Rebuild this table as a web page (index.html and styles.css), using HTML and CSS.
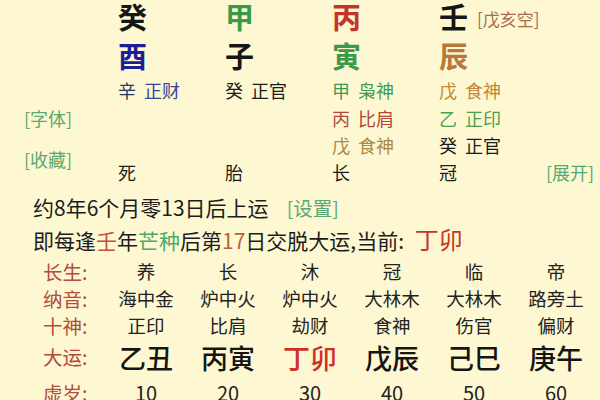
FILE: index.html
```html
<!DOCTYPE html>
<html lang="zh-CN">
<head>
<meta charset="utf-8">
<title>八字排盘</title>
<link rel="stylesheet" href="styles.css">
</head>
<body>
<div class="page">
  <div class="pillars">
    <div></div>
    <div class="gz black">癸</div>
    <div class="gz green">甲</div>
    <div class="gz red">丙</div>
    <div class="gz black">壬<span class="kong">[戊亥空]</span></div>
    <div></div>

    <div></div>
    <div class="gz blue">酉</div>
    <div class="gz black">子</div>
    <div class="gz green">寅</div>
    <div class="gz brown">辰</div>
    <div></div>

    <div></div>
    <div class="hs navy"><span>辛</span><span class="navy2">正财</span></div>
    <div class="hs"><span>癸</span><span>正官</span></div>
    <div class="hs green2"><span>甲</span><span>枭神</span></div>
    <div class="hs orange"><span>戊</span><span>食神</span></div>
    <div></div>

    <div class="side">[字体]</div>
    <div></div>
    <div></div>
    <div class="hs rust"><span>丙</span><span>比肩</span></div>
    <div class="hs green3"><span>乙</span><span>正印</span></div>
    <div></div>

    <div class="side span2">[收藏]</div>
    <div></div>
    <div></div>
    <div class="hs olive"><span>戊</span><span>食神</span></div>
    <div class="hs"><span>癸</span><span>正官</span></div>
    <div></div>

    <div class="hs">死</div>
    <div class="hs">胎</div>
    <div class="hs">长</div>
    <div class="hs">冠</div>
    <div class="side expand">[展开]</div>
  </div>

  <div class="lines">
    <p class="line">约8年6个月零13日后上运<span class="link">[设置]</span></p>
    <p class="line">即每逢<span class="t-red">壬</span>年<span class="t-green">芒种</span>后第<span class="t-brown">17</span>日交脱大运,当前: <span class="cur">丁卯</span></p>
  </div>

  <div class="dayun">
    <div class="lbl">长生:</div>
    <div class="cell">养</div><div class="cell">长</div><div class="cell">沐</div><div class="cell">冠</div><div class="cell">临</div><div class="cell">帝</div>

    <div class="lbl">纳音:</div>
    <div class="cell">海中金</div><div class="cell">炉中火</div><div class="cell">炉中火</div><div class="cell">大林木</div><div class="cell">大林木</div><div class="cell">路旁土</div>

    <div class="lbl">十神:</div>
    <div class="cell">正印</div><div class="cell">比肩</div><div class="cell">劫财</div><div class="cell">食神</div><div class="cell">伤官</div><div class="cell">偏财</div>

    <div class="lbl">大运:</div>
    <div class="cell big">乙丑</div><div class="cell big">丙寅</div><div class="cell big now">丁卯</div><div class="cell big">戊辰</div><div class="cell big">己巳</div><div class="cell big">庚午</div>

    <div class="lbl">虚岁:</div>
    <div class="cell num">10</div><div class="cell num">20</div><div class="cell num">30</div><div class="cell num">40</div><div class="cell num">50</div><div class="cell num">60</div>
  </div>
</div>
</body>
</html>
```

FILE: styles.css
```css
html, body {
  margin: 0;
  padding: 0;
}
body {
  background: #fdf8d2;
  font-family: "Noto Sans CJK SC", "Noto Sans", sans-serif;
  color: #1c1c1c;
  width: 600px;
  height: 400px;
  overflow: hidden;
}
.page {
  width: 600px;
}

/* ---- pillars ---- */
.pillars {
  display: grid;
  grid-template-columns: 118px 107px 107px 107px 107px 1fr;
  grid-template-rows: 36px 42px 28px 27px 27px 28px;
  align-items: center;
  margin-top: -2px;
}
.gz {
  font-size: 29px;
  font-weight: 700;
  line-height: 1;
  white-space: nowrap;
  display: flex;
  align-items: center;
}
.black { color: #161616; }
.green { color: #3b9a49; }
.red { color: #c3342c; }
.blue { color: #1d1f98; }
.brown { color: #b9783a; }
.kong {
  font-size: 17px;
  font-weight: 400;
  color: #a86b52;
  margin-left: 9px;
  margin-top: 4px;
}
.hs {
  font-size: 18px;
  line-height: 1;
  display: flex;
  gap: 8px;
  white-space: nowrap;
}
.navy { color: #2b3566; }
.navy2 { color: #36479a; }
.green2 { color: #3e9a55; }
.green3 { color: #4aa24f; }
.orange { color: #c48736; }
.rust { color: #b2463a; }
.olive { color: #a88a42; }
.side {
  font-size: 18px;
  color: #5aa872;
  padding-left: 24px;
  line-height: 1;
  white-space: nowrap;
}
.span2 {
  grid-row: span 2;
}
.expand {
  text-align: right;
  padding-left: 0;
  padding-right: 10px;
}

/* ---- text lines ---- */
.lines {
  padding-left: 33px;
  padding-top: 5px;
}
.line {
  margin: 0;
  font-size: 21px;
  line-height: 32px;
  height: 32px;
  white-space: nowrap;
  color: #1c1c1c;
}
.link {
  font-size: 19.5px;
  color: #5aa872;
  margin-left: 18px;
}
.t-red { color: #c4503a; }
.t-green { color: #4bab6c; }
.t-brown { color: #b2643a; }
.cur {
  font-size: 24px;
  color: #c8352a;
  margin-left: 6px;
}

/* ---- da yun table ---- */
.dayun {
  display: grid;
  grid-template-columns: 105px repeat(6, 82px);
  grid-template-rows: 27px 27px 27px 36px 36px;
  align-items: center;
  margin-top: 3px;
}
.lbl {
  padding-left: 43px;
  font-size: 19.5px;
  color: #b44a3a;
  line-height: 1;
  white-space: nowrap;
}
.cell {
  text-align: center;
  font-size: 18.5px;
  line-height: 1;
  color: #222;
  white-space: nowrap;
}
.big {
  font-size: 27px;
  font-weight: 500;
  color: #151515;
}
.now {
  color: #cf2f28;
}
.num {
  font-size: 20px;
}
```
